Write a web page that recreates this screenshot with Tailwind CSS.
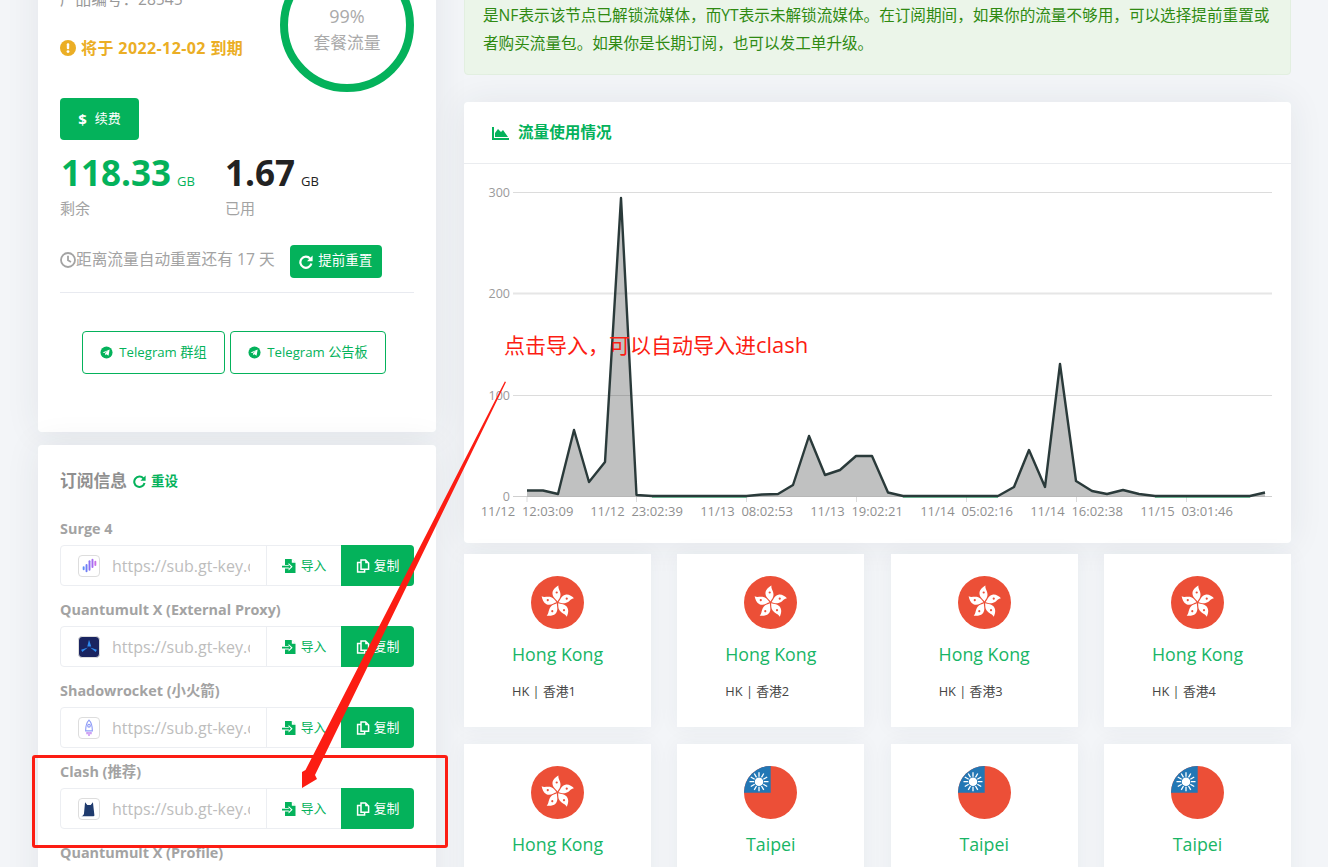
<!DOCTYPE html>
<html>
<head>
    <meta charset="utf-8">
    <title>Dashboard</title>
    <script src="https://cdn.jsdelivr.net/npm/@tailwindcss/browser@4"></script>
</head>
<body class="bg-[#f3f5f8]">
    <!-- icon sprites -->
    <svg class="absolute w-0 h-0">
        <symbol id="ic-import" viewBox="0 0 14 14">
            <path fill="currentColor" d="M3 0h6.500L13.500 4v10H3z"/>
            <path fill="#fff" d="M9.800 0v3.700h3.700z"/>
            <path fill="#fff" d="M3 6h3.600V4l4 3.700-4 3.700V9.400H3z"/>
            <path fill="currentColor" d="M0 6.800h6.800V5.600l2.200 2.100-2.200 2.100V8.600H0z"/>
        </symbol>
        <symbol id="ic-copy" viewBox="0 0 14 14">
            <path fill="none" stroke="#fff" stroke-width="1.500" d="M5 1h4.500L12.600 4v6.200H5z"/>
            <path fill="none" stroke="#fff" stroke-width="1.500" d="M5 3.500H1.600v9.600h7v-3"/>
            <path fill="#fff" d="M9.200 1v3.200h3.400z"/>
        </symbol>
        <symbol id="ic-redo" viewBox="0 0 14 14">
            <path fill="none" stroke="currentColor" stroke-width="2.200" d="M11.200 3.600A5.600 5.600 0 1 0 12.400 8.600"/>
            <path fill="currentColor" d="M13.600.6v5.600H8z"/>
        </symbol>
        <symbol id="ic-telegram" viewBox="0 0 14 14">
            <circle cx="7" cy="7" r="6.500" fill="currentColor"/>
            <path fill="#fff" d="M2.800 6.900l7.600-3-1.200 6.600-2.300-1.700-1.200 1.100-.2-2.100 3.300-2.900-4.100 2.600z"/>
        </symbol>
        <symbol id="flag-hk" viewBox="0 0 53 53">
            <circle cx="26.500" cy="26.500" r="26.500" fill="#ec4f37"/>
            <g transform="translate(26.500 26.500)">
                <g id="hk-petal">
                    <path fill="#fff" d="M0-1C-1.500-3.500-5.500-5.500-5-10-4.500-13.500-1.500-15.500 1-17 .2-14 3.200-11.500 3-7.500 2.800-4.500 1-3 0-1Z"/>
                    <circle cx="-.8" cy="-10" r="1.100" fill="#ec4f37"/>
                </g>
                <use href="#hk-petal" transform="rotate(72)"/>
                <use href="#hk-petal" transform="rotate(144)"/>
                <use href="#hk-petal" transform="rotate(216)"/>
                <use href="#hk-petal" transform="rotate(288)"/>
            </g>
        </symbol>
        <symbol id="flag-tw" viewBox="0 0 53 53">
            <circle cx="26.500" cy="26.500" r="26.500" fill="#ec4f37"/>
            <path fill="#2277b5" d="M26.700 0A26.500 26.500 0 0 0 0 26.700H26.700Z"/>
            <g transform="translate(15 15.700)" stroke="#fff" stroke-width="1.300">
                <path d="M0-9.500V-5M0 9.500V5M-9.500 0H-5M9.500 0H5M-4.750-8.230-2.500-4.330M4.750-8.230 2.500-4.330M-4.750 8.230-2.500 4.330M4.750 8.230 2.500 4.330M-8.230-4.750-4.330-2.500M8.230-4.750 4.330-2.500M-8.230 4.750-4.330 2.500M8.230 4.750 4.330 2.500"/>
                <circle r="4.300" fill="#fff" stroke="none"/>
            </g>
        </symbol>
    </svg>

    <div class="h-[867px] w-[1328px] overflow-hidden relative font-['Open_Sans','Noto_Sans_CJK_SC',sans-serif]">
        <div class="flex gap-[28px] pl-[38px] -mt-[100px]">

            <!-- left column -->
            <div class="w-[398px] shrink-0 flex flex-col gap-[13px]">
                <div class="h-[532px] bg-white rounded-[4px] px-[22px] pt-[58px] shadow-[0_0_35px_rgba(40,50,70,0.08)]">
                    <div class="flex justify-between h-[134px]">
                        <div>
                            <div class="mt-[31px] h-[20px] text-[15.600px] leading-[20px] text-[#999]">产品编号：28545</div>
                            <div class="mt-[27px] h-[24px] flex items-center gap-[5px] text-[#ebae25] text-[16px] tracking-[0.4px] font-bold">
                                <svg class="w-[16px] h-[16px]" viewBox="0 0 16 16"><circle cx="8" cy="8" r="8" fill="currentColor"/><rect x="6.800" y="3.200" width="2.400" height="6" rx="1" fill="#fff"/><circle cx="8" cy="11.600" r="1.400" fill="#fff"/></svg>
                                <span>将于 2022-12-02 到期</span>
                            </div>
                        </div>
                        <div class="w-[134px] h-[134px] rounded-full border-[8px] border-[#04b25b] flex flex-col items-center text-[#aaa]">
                            <div class="mt-[38px] text-[18px] leading-[24px]">99%</div>
                            <div class="mt-[3px] text-[16.800px] leading-[24px]">套餐流量</div>
                        </div>
                    </div>
                    <button class="mt-[6px] w-[79px] h-[42px] bg-[#04b25b] rounded-[4px] text-white text-[13px] flex items-center justify-center gap-[8px]">
                        <span class="font-bold text-[15px]">$</span><span>续费</span>
                    </button>
                    <div class="flex mt-[13px]">
                        <div class="w-[165px]">
                            <div class="h-[40px] leading-[40px] text-[#04b25b] pl-[1px]"><span class="text-[35px] font-bold">118.33</span><span class="text-[13px] ml-[6px]">GB</span></div>
                            <div class="mt-[4px] text-[15px] leading-[22px] text-[#a3a3a3]">剩余</div>
                        </div>
                        <div>
                            <div class="h-[40px] leading-[40px] text-[#222]"><span class="text-[35px] font-bold">1.67</span><span class="text-[13px] ml-[6px]">GB</span></div>
                            <div class="mt-[4px] text-[15px] leading-[22px] text-[#a3a3a3]">已用</div>
                        </div>
                    </div>
                    <div class="flex items-center mt-[26px] h-[33px] text-[#a3a3a3] text-[15.700px]">
                        <svg class="w-[16px] h-[16px] -mt-[3px]" viewBox="0 0 16 16" fill="none" stroke="currentColor" stroke-width="1.800"><circle cx="8" cy="8" r="7"/><path d="M8 3.800V8.300L11 10"/></svg>
                        <span class="pb-[3px]">距离流量自动重置还有 17 天</span>
                        <button class="ml-[15px] w-[92px] h-[33px] bg-[#04b25b] rounded-[4px] text-white text-[13.500px] flex items-center justify-center gap-[5px]">
                            <svg class="w-[14px] h-[14px] text-white"><use href="#ic-redo"/></svg><span class="pb-[2px]">提前重置</span>
                        </button>
                    </div>
                    <div class="mt-[14px] border-t border-[#e8eaf0]"></div>
                    <div class="mt-[38px] pl-[22px] flex gap-[5px]">
                        <a class="w-[143px] h-[43px] border border-[#04b25b] rounded-[4px] text-[#04b25b] text-[13.200px] flex items-center justify-center gap-[6px]">
                            <svg class="w-[13px] h-[13px]"><use href="#ic-telegram"/></svg><span>Telegram 群组</span>
                        </a>
                        <a class="w-[156px] h-[43px] border border-[#04b25b] rounded-[4px] text-[#04b25b] text-[13.200px] flex items-center justify-center gap-[6px]">
                            <svg class="w-[13px] h-[13px]"><use href="#ic-telegram"/></svg><span>Telegram 公告板</span>
                        </a>
                    </div>
                </div>

                <div class="bg-white rounded-[4px] px-[22px] pt-[24px] h-[500px] shadow-[0_0_35px_rgba(40,50,70,0.08)]">
                    <div class="h-[24px] flex items-center">
                        <span class="text-[16.750px] font-bold text-[#8f8f8f]">订阅信息</span>
                        <svg class="w-[13px] h-[13px] ml-[6px] text-[#04b25b]"><use href="#ic-redo"/></svg>
                        <span class="ml-[5px] text-[13.500px] font-bold text-[#04b25b]">重设</span>
                    </div>

                    <div class="mt-[26px] h-[20px] leading-[20px] text-[14.400px] font-bold text-[#a3a3a3]">Surge 4</div>
                    <div class="mt-[6px] h-[41px] flex border border-[#eceef2] rounded-[4px]">
                        <div class="w-[205px] flex items-center pl-[17px]">
                            <div class="w-[22px] h-[22px] shrink-0 rounded-[4px] border border-[#ddd] flex items-center justify-center">
                                <svg class="w-[17px] h-[17px]" viewBox="0 0 16 16" fill="none" stroke-width="1.800" stroke-linecap="round"><path stroke="#5f8df7" d="M2.500 9.500v2"/><path stroke="#6f7ff5" d="M5.200 7.500v6"/><path stroke="#8a6ff2" d="M8 4v8"/><path stroke="#a56cf0" d="M10.800 2.500v7"/><path stroke="#c86ee8" d="M13.500 4.500v3"/></svg>
                            </div>
                            <input readonly class="ml-[12px] w-[138px] bg-transparent outline-none text-[16px] text-[#bdbdbd]" value="https://sub.gt-key.com/api/v1/client/subscribe">
                        </div>
                        <div class="w-[75px] pt-[1px] border-l border-[#eceef2] flex items-center justify-center gap-[5px] text-[#04b25b] text-[12.800px]">
                            <svg class="w-[14px] h-[14px]"><use href="#ic-import"/></svg><span>导入</span>
                        </div>
                        <div class="flex-1 pt-[1px] -my-px -mr-px bg-[#04b25b] rounded-r-[4px] flex items-center justify-center gap-[4px] text-white text-[12.800px]">
                            <svg class="w-[14px] h-[14px]"><use href="#ic-copy"/></svg><span>复制</span>
                        </div>
                    </div>

                    <div class="mt-[14px] h-[20px] leading-[20px] text-[14.400px] font-bold text-[#a3a3a3]">Quantumult X (External Proxy)</div>
                    <div class="mt-[6px] h-[41px] flex border border-[#eceef2] rounded-[4px]">
                        <div class="w-[205px] flex items-center pl-[17px]">
                            <div class="w-[22px] h-[22px] shrink-0 rounded-[4px] bg-[#1a2460] border border-[#ddd] flex items-center justify-center">
                                <svg class="w-[18px] h-[18px]" viewBox="0 0 16 16" fill="#2f8cf0"><path d="M8 1.500l2 6H6.500z"/><path d="M7 8.500L2 12.500l-1-2z"/><path d="M9 8.500l5 4 1-2z"/></svg>
                            </div>
                            <input readonly class="ml-[12px] w-[138px] bg-transparent outline-none text-[16px] text-[#bdbdbd]" value="https://sub.gt-key.com/api/v1/client/subscribe">
                        </div>
                        <div class="w-[75px] pt-[1px] border-l border-[#eceef2] flex items-center justify-center gap-[5px] text-[#04b25b] text-[12.800px]">
                            <svg class="w-[14px] h-[14px]"><use href="#ic-import"/></svg><span>导入</span>
                        </div>
                        <div class="flex-1 pt-[1px] -my-px -mr-px bg-[#04b25b] rounded-r-[4px] flex items-center justify-center gap-[4px] text-white text-[12.800px]">
                            <svg class="w-[14px] h-[14px]"><use href="#ic-copy"/></svg><span>复制</span>
                        </div>
                    </div>

                    <div class="mt-[14px] h-[20px] leading-[20px] text-[14.400px] font-bold text-[#a3a3a3]">Shadowrocket (小火箭)</div>
                    <div class="mt-[6px] h-[41px] flex border border-[#eceef2] rounded-[4px]">
                        <div class="w-[205px] flex items-center pl-[17px]">
                            <div class="w-[22px] h-[22px] shrink-0 rounded-[4px] border border-[#ddd] flex items-center justify-center">
                                <svg class="w-[18px] h-[18px]" viewBox="0 0 16 16" fill="none" stroke="#8f9cf7" stroke-width="1"><path d="M8 1C10.500 3.500 11 6.500 11 10.500H5C5 6.500 5.500 3.500 8 1Z"/><circle cx="8" cy="6" r="1.200"/><path stroke="#c58cf0" stroke-width="1.300" d="M8 11.500v3.500M6.300 11.500v2M9.700 11.500v2"/></svg>
                            </div>
                            <input readonly class="ml-[12px] w-[138px] bg-transparent outline-none text-[16px] text-[#bdbdbd]" value="https://sub.gt-key.com/api/v1/client/subscribe">
                        </div>
                        <div class="w-[75px] pt-[1px] border-l border-[#eceef2] flex items-center justify-center gap-[5px] text-[#04b25b] text-[12.800px]">
                            <svg class="w-[14px] h-[14px]"><use href="#ic-import"/></svg><span>导入</span>
                        </div>
                        <div class="flex-1 pt-[1px] -my-px -mr-px bg-[#04b25b] rounded-r-[4px] flex items-center justify-center gap-[4px] text-white text-[12.800px]">
                            <svg class="w-[14px] h-[14px]"><use href="#ic-copy"/></svg><span>复制</span>
                        </div>
                    </div>

                    <div class="mt-[14px] h-[20px] leading-[20px] text-[14.400px] font-bold text-[#a3a3a3]">Clash (推荐)</div>
                    <div class="mt-[6px] h-[41px] flex border border-[#eceef2] rounded-[4px]">
                        <div class="w-[205px] flex items-center pl-[17px]">
                            <div class="w-[22px] h-[22px] shrink-0 rounded-[4px] border border-[#ddd] flex items-center justify-center">
                                <svg class="w-[18px] h-[18px]" viewBox="0 0 16 16" fill="#1f3b6e"><path d="M4.500 2L6.500 4.500H9.500L11.500 2 12.800 13.500C12.800 14.200 12.300 14.500 11.500 14.500H4.500C4 14.500 3.500 14.200 3.400 13.500Z"/><path d="M1 14.500C2.500 14.500 3 13.500 3.600 12.500L4 14.500Z"/></svg>
                            </div>
                            <input readonly class="ml-[12px] w-[138px] bg-transparent outline-none text-[16px] text-[#bdbdbd]" value="https://sub.gt-key.com/api/v1/client/subscribe">
                        </div>
                        <div class="w-[75px] pt-[1px] border-l border-[#eceef2] flex items-center justify-center gap-[5px] text-[#04b25b] text-[12.800px]">
                            <svg class="w-[14px] h-[14px]"><use href="#ic-import"/></svg><span>导入</span>
                        </div>
                        <div class="flex-1 pt-[1px] -my-px -mr-px bg-[#04b25b] rounded-r-[4px] flex items-center justify-center gap-[4px] text-white text-[12.800px]">
                            <svg class="w-[14px] h-[14px]"><use href="#ic-copy"/></svg><span>复制</span>
                        </div>
                    </div>

                    <div class="mt-[14px] h-[20px] leading-[20px] text-[14.400px] font-bold text-[#a3a3a3]">Quantumult X (Profile)</div>
                </div>
            </div>

            <!-- right column -->
            <div class="w-[827px] shrink-0">
                <div class="h-[175px] bg-[#ebf5e9] border border-[#e2efe0] rounded-[4px] flex flex-col justify-end pb-[17px] px-[18px] text-[15.620px] leading-[28px] text-[#2f8a12] whitespace-nowrap">
                    <div>是NF表示该节点已解锁流媒体，而YT表示未解锁流媒体。在订阅期间，如果你的流量不够用，可以选择提前重置或</div>
                    <div>者购买流量包。如果你是长期订阅，也可以发工单升级。</div>
                </div>

                <div class="mt-[27px] h-[441px] bg-white rounded-[4px] shadow-[0_0_35px_rgba(40,50,70,0.08)]">
                    <div class="h-[62px] border-b border-[#eaecef] flex items-center pl-[28px] gap-[9px] text-[#04b25b]">
                        <svg class="w-[17px] h-[14px]" viewBox="0 0 17 14" fill="currentColor"><path d="M0 1h2v11h15v2H0z"/><path d="M3 11V7l3-4 3 3 2-2 5 7z"/></svg>
                        <span class="text-[15.600px] font-bold">流量使用情况</span>
                    </div>
                    <svg class="block" width="827" height="379" viewBox="464 164 827 379" font-size="13" fill="#8f8f8f">
                        <g stroke="#dcdcdc" stroke-width="1">
                            <path d="M513 192.500H1272"/>
                            <path d="M513 293.500H1272" stroke="#e6e6e6" stroke-width="2"/>
                            <path d="M513 395.500H1272"/>
                            <path d="M513 496.500H1272" stroke="#cfcfcf"/>
                            <path d="M527 497v5M636.500 497v5M746.500 497v5M856.500 497v5M966.500 497v5M1076.500 497v5M1186.500 497v5"/>
                        </g>
                        <g text-anchor="end" fill="#9a9a9a" font-size="12.500">
                            <text x="510" y="196.500">300</text>
                            <text x="510" y="297.500">200</text>
                            <text x="510" y="399.500">100</text>
                            <text x="510" y="500.500">0</text>
                        </g>
                        <g text-anchor="middle">
                            <text x="527" y="516">11/12&#160;&#160;12:03:09</text>
                            <text x="636.500" y="516">11/12&#160;&#160;23:02:39</text>
                            <text x="746.500" y="516">11/13&#160;&#160;08:02:53</text>
                            <text x="856.500" y="516">11/13&#160;&#160;19:02:21</text>
                            <text x="966.500" y="516">11/14&#160;&#160;05:02:16</text>
                            <text x="1076.500" y="516">11/14&#160;&#160;16:02:38</text>
                            <text x="1186.500" y="516">11/15&#160;&#160;03:01:46</text>
                        </g>
                        <path d="M652 497H746.500M903 497H998M1155 497H1250" stroke="#04b25b" stroke-width="1" fill="none"/>
                        <path fill="#2d3232" fill-opacity="0.3" d="M527 490.500L543 490.500 558 494 574 430 589 482 605 462 621 198 636.500 495 652 496 746.500 496 762 494.500 778 494 793 485 809 436 825 475 840 470 856 456 872 456 888 492.500 903 496 998 496 1014 487 1029 450 1045 487 1060 364 1076 481 1092 491 1107 494 1123 490 1139 494 1155 496 1250 496 1265 492.500V496.500H527Z"/>
                        <path fill="none" stroke="#2a3a3a" stroke-width="2.400" stroke-linejoin="round" d="M527 490.500L543 490.500 558 494 574 430 589 482 605 462 621 198 636.500 495 652 496 746.500 496 762 494.500 778 494 793 485 809 436 825 475 840 470 856 456 872 456 888 492.500 903 496 998 496 1014 487 1029 450 1045 487 1060 364 1076 481 1092 491 1107 494 1123 490 1139 494 1155 496 1250 496 1265 492.500"/>
                    </svg>
                </div>

                <div class="mt-[11px] grid grid-cols-4 gap-x-[26.330px] gap-y-[17px]">
                    <div class="h-[173px] bg-white shadow-[0_0_20px_rgba(40,50,70,0.05)] flex flex-col items-center pt-[22px]">
                        <svg class="w-[53px] h-[53px]"><use href="#flag-hk"/></svg>
                        <div class="mt-[12px] text-[17.800px] leading-[26px] text-[#18b566]">Hong Kong</div>
                        <div class="mt-[14px] self-stretch pl-[48px] text-[12.800px] leading-[20px] text-[#444]">HK | 香港1</div>
                    </div>
                    <div class="h-[173px] bg-white shadow-[0_0_20px_rgba(40,50,70,0.05)] flex flex-col items-center pt-[22px]">
                        <svg class="w-[53px] h-[53px]"><use href="#flag-hk"/></svg>
                        <div class="mt-[12px] text-[17.800px] leading-[26px] text-[#18b566]">Hong Kong</div>
                        <div class="mt-[14px] self-stretch pl-[48px] text-[12.800px] leading-[20px] text-[#444]">HK | 香港2</div>
                    </div>
                    <div class="h-[173px] bg-white shadow-[0_0_20px_rgba(40,50,70,0.05)] flex flex-col items-center pt-[22px]">
                        <svg class="w-[53px] h-[53px]"><use href="#flag-hk"/></svg>
                        <div class="mt-[12px] text-[17.800px] leading-[26px] text-[#18b566]">Hong Kong</div>
                        <div class="mt-[14px] self-stretch pl-[48px] text-[12.800px] leading-[20px] text-[#444]">HK | 香港3</div>
                    </div>
                    <div class="h-[173px] bg-white shadow-[0_0_20px_rgba(40,50,70,0.05)] flex flex-col items-center pt-[22px]">
                        <svg class="w-[53px] h-[53px]"><use href="#flag-hk"/></svg>
                        <div class="mt-[12px] text-[17.800px] leading-[26px] text-[#18b566]">Hong Kong</div>
                        <div class="mt-[14px] self-stretch pl-[48px] text-[12.800px] leading-[20px] text-[#444]">HK | 香港4</div>
                    </div>
                    <div class="h-[173px] bg-white shadow-[0_0_20px_rgba(40,50,70,0.05)] flex flex-col items-center pt-[22px]">
                        <svg class="w-[53px] h-[53px]"><use href="#flag-hk"/></svg>
                        <div class="mt-[12px] text-[17.800px] leading-[26px] text-[#18b566]">Hong Kong</div>
                    </div>
                    <div class="h-[173px] bg-white shadow-[0_0_20px_rgba(40,50,70,0.05)] flex flex-col items-center pt-[22px]">
                        <svg class="w-[53px] h-[53px]"><use href="#flag-tw"/></svg>
                        <div class="mt-[12px] text-[17.800px] leading-[26px] text-[#18b566]">Taipei</div>
                    </div>
                    <div class="h-[173px] bg-white shadow-[0_0_20px_rgba(40,50,70,0.05)] flex flex-col items-center pt-[22px]">
                        <svg class="w-[53px] h-[53px]"><use href="#flag-tw"/></svg>
                        <div class="mt-[12px] text-[17.800px] leading-[26px] text-[#18b566]">Taipei</div>
                    </div>
                    <div class="h-[173px] bg-white shadow-[0_0_20px_rgba(40,50,70,0.05)] flex flex-col items-center pt-[22px]">
                        <svg class="w-[53px] h-[53px]"><use href="#flag-tw"/></svg>
                        <div class="mt-[12px] text-[17.800px] leading-[26px] text-[#18b566]">Taipei</div>
                    </div>
                </div>
            </div>
        </div>

        <!-- annotations drawn on top of the screenshot -->
        <div class="absolute left-[504px] top-[330px] text-[21px] leading-[28px] text-[#fc1d13] whitespace-nowrap">点击导入，可以自动导入进<span class="text-[22px]">clash</span></div>
        <div class="absolute left-[32px] top-[755px] w-[416px] h-[93px] border-[3px] border-[#fc1d13] rounded-[3px]"></div>
        <svg class="absolute left-0 top-0 pointer-events-none" width="1328" height="867" viewBox="0 0 1328 867">
            <path fill="#fc1d13" d="M506 382L315 775 317 779 302 788 302 772 305.500 770 504.800 381.400Z"/>
        </svg>
    </div>
</body>
</html>
